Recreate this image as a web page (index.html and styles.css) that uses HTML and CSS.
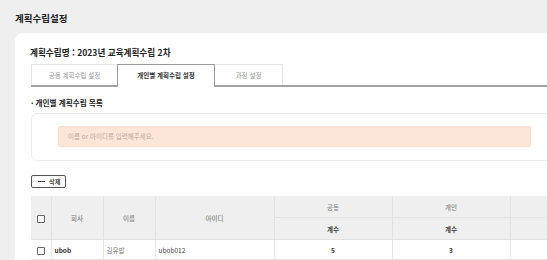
FILE: index.html
```html
<!DOCTYPE html>
<html lang="ko">
<head>
<meta charset="utf-8">
<link rel="stylesheet" href="styles.css">
</head>
<body>
<div class="page">
  <h1 class="page-title">계획수립설정</h1>
  <div class="card">
    <div class="plan-name">계획수립명 : 2023년 교육계획수립 2차</div>
    <div class="tabs">
      <div class="tab">공동 계획수립 설정</div>
      <div class="tab active">개인별 계획수립 설정</div>
      <div class="tab tab-narrow">과정 설정</div>
    </div>
    <div class="section-title">· 개인별 계획수립 목록</div>
    <div class="search-box">
      <div class="search-input">이름 or 아이디를 입력해주세요.</div>
    </div>
    <button class="btn-delete"><span class="minus"></span>삭제</button>
    <table class="grid">
      <colgroup>
        <col class="c-check"><col class="c-company"><col class="c-name"><col class="c-id"><col class="c-num"><col class="c-num"><col>
      </colgroup>
      <thead>
        <tr class="h1">
          <th rowspan="2"><span class="chk"></span></th>
          <th rowspan="2">회사</th>
          <th rowspan="2">이름</th>
          <th rowspan="2">아이디</th>
          <th>공동</th>
          <th>개인</th>
          <th></th>
        </tr>
        <tr class="h2">
          <th>계수</th>
          <th>계수</th>
          <th></th>
        </tr>
      </thead>
      <tbody>
        <tr>
          <td class="center"><span class="chk"></span></td>
          <td class="strong">ubob</td>
          <td class="muted">김유밥</td>
          <td>ubob012</td>
          <td class="center strong">5</td>
          <td class="center strong">3</td>
          <td></td>
        </tr>
      </tbody>
    </table>
  </div>
</div>
</body>
</html>
```

FILE: styles.css
```css
html, body {
  margin: 0;
  padding: 0;
  background: #efefef;
  overflow: hidden;
  font-family: "Noto Sans CJK KR", "Noto Sans", sans-serif;
  color: #222;
}
.page {
  padding: 12px 0 0 15px;
}
.page-title {
  margin: 0;
  font-size: 9.5px;
  line-height: 12px;
  font-weight: 700;
  color: #222;
}
.card {
  margin-top: 9px;
  width: 527px;
  background: #fff;
  border-radius: 8px 0 0 0;
  padding: 13px 16px 20px 16px;
}
.plan-name {
  font-size: 8.6px;
  line-height: 12px;
  font-weight: 700;
  margin-left: -1px;
}
.tabs {
  margin-top: 6px;
  display: flex;
  border-bottom: 2px solid #a3a3a3;
  height: 21px;
}
.tab {
  box-sizing: border-box;
  width: 87px;
  height: 21px;
  border: 1px solid #e6e6e6;
  border-bottom: none;
  margin-right: -1px;
  font-size: 6.5px;
  line-height: 20px;
  text-align: center;
  color: #9a9a9a;
  background: #fff;
}
.tab.active {
  width: 98px;
  height: 23px;
  border-color: #9a9a9a;
  color: #333;
  font-weight: 700;
  position: relative;
  z-index: 1;
}
.tab.tab-narrow {
  width: 69px;
}
.section-title {
  margin-top: 11px;
  font-size: 7.6px;
  line-height: 10px;
  font-weight: 700;
  color: #222;
}
.search-box {
  margin-top: 5px;
  box-sizing: border-box;
  height: 48px;
  border: 1px solid #ededed;
  border-radius: 6px;
  padding: 12px 26px 0 26px;
}
.search-input {
  height: 21px;
  box-sizing: border-box;
  background: #fde6d8;
  border: 1px solid #fbdccb;
  border-radius: 2px;
  padding-left: 9px;
  font-size: 6.5px;
  line-height: 19px;
  color: #bba89c;
}
.btn-delete {
  margin-top: 14px;
  display: flex;
  align-items: center;
  gap: 4px;
  box-sizing: border-box;
  width: 35px;
  height: 13px;
  padding: 0 0 0 6px;
  border: 1px solid #555;
  border-radius: 2px;
  background: #fff;
  font-family: inherit;
  font-size: 6.2px;
  line-height: 11px;
  font-weight: 700;
  color: #444;
}
.minus {
  display: block;
  width: 7px;
  height: 1px;
  background: #444;
}
.grid {
  margin-top: 8px;
  width: 527px;
  table-layout: fixed;
  border-collapse: collapse;
  font-size: 6.5px;
}
.c-check { width: 20px; }
.c-company { width: 52px; }
.c-name { width: 52px; }
.c-id { width: 119px; }
.c-num { width: 118px; }
.grid th {
  background: #efefef;
  border: 1px solid #e2e2e2;
  border-top: none;
  font-weight: 500;
  color: #888;
  padding: 0;
  text-align: center;
}
.grid tr.h1 th { height: 21px; }
.grid tr.h2 th { height: 21px; color: #444; font-weight: 700; }
.grid th:first-child, .grid td:first-child { border-left: none; }
.grid td {
  height: 19px;
  border: 1px solid #e6e6e6;
  padding: 0 0 0 3px;
  color: #444;
}
.grid td.center { text-align: center; padding: 0; }
.grid td.strong { font-weight: 700; color: #333; }
.grid td.muted { color: #777; }
.chk {
  display: inline-block;
  box-sizing: border-box;
  width: 8px;
  height: 8px;
  border: 1px solid #666;
  border-radius: 1px;
  background: #fff;
  vertical-align: middle;
}
```
